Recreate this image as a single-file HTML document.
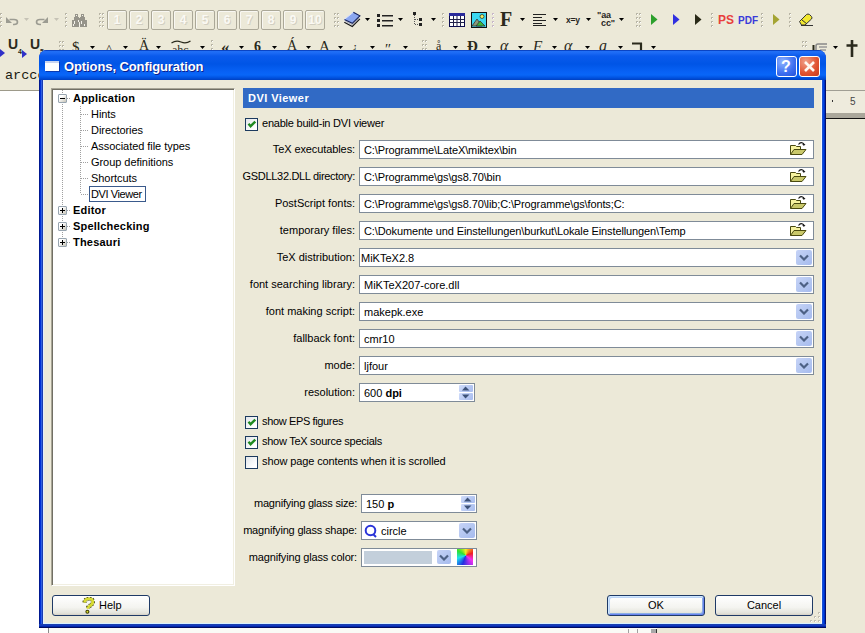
<!DOCTYPE html>
<html><head><meta charset="utf-8">
<style>
*{box-sizing:border-box;margin:0;padding:0}
html,body{width:865px;height:633px;overflow:hidden;background:#ECE9D8;font-family:"Liberation Sans",sans-serif;font-size:11px;color:#000;position:relative}
.a{position:absolute}
#dlg{left:39px;top:50px;width:787px;height:578px;background:#0831D9;border-radius:8px 8px 0 0}
#title{left:0;top:0;width:787px;height:30px;border-radius:8px 8px 0 0;background:linear-gradient(#0A44C4 0px,#0A44C4 1px,#2270F6 1px,#1C6AF4 3px,#0A5AEC 6px,#0055E6 14px,#0862F6 22px,#0866F8 25px,#0050DE 28px,#0040C0 30px)}
#client{left:4px;top:30px;width:779px;height:544px;background:#ECE9D8}
.lbl{position:absolute;text-align:right;white-space:nowrap;line-height:13px}
.tb{position:absolute;background:#fff;border:1px solid #7F9DB9;height:19px;white-space:nowrap;line-height:19px;padding-left:4px;overflow:hidden;border-color:#7F8B98}
.cb{position:absolute;width:13px;height:13px;border:1px solid #1C3A5E;background:linear-gradient(135deg,#E2E6EA,#FFFFFF 80%)}
.chk{position:absolute;white-space:nowrap;line-height:13px}
.dd{position:absolute;right:1px;top:1px;width:16px;height:15px;border-radius:2px;background:linear-gradient(135deg,#C6D3F7,#B2C5F0 60%,#A6BAEF)}
.dd svg{position:absolute;left:3px;top:4px}
.spin{position:absolute;right:1px;top:1px;width:14px;height:15px}
.su,.sd{position:absolute;left:0;width:14px;height:7px;border-radius:1px;background:linear-gradient(135deg,#D0DCFA,#B6C8F2 60%,#A8BCEE)}
.su{top:0}.sd{top:8px}
.su svg,.sd svg{position:absolute;left:3px;top:1px}
.btn{position:absolute;height:22px;border:1px solid #003C74;border-radius:3px;background:linear-gradient(#FFFFFF,#F4F4F0 60%,#E3E3DB 90%,#D6D0C5);text-align:center;line-height:18px;border-color:#1F3A66}
</style></head><body>
<div class="a" style="left:0;top:91px;width:60px;height:542px;background:#fff"></div>
<div class="a" style="left:0;top:90px;width:45px;height:1px;background:#9D9A8A"></div>
<div class="a" style="left:0;top:628px;width:657px;height:5px;background:#fff"></div>
<div class="a" style="left:48px;top:628px;width:1px;height:5px;background:#8A8A8A"></div>
<div class="a" style="left:49px;top:628px;width:608px;height:5px;background:#FAFAF6"></div>
<div class="a" style="left:628px;top:629px;width:1px;height:4px;background:#A0A0A0"></div>
<div class="a" style="left:637px;top:629px;width:1px;height:4px;background:#A0A0A0"></div>
<div class="a" style="left:651px;top:629px;width:5px;height:4px;background:#A8A8A8"></div>
<div class="a" style="left:656px;top:629px;width:1px;height:4px;background:#333"></div>
<div class="a" style="left:826px;top:90px;width:39px;height:1px;background:#A09E94"></div>
<div class="a" style="left:826px;top:91px;width:39px;height:22px;background:#EEEBDD"></div>
<div class="a" style="left:826px;top:113px;width:39px;height:5px;background:#AAA79B"></div>
<div class="a" style="left:826px;top:118px;width:39px;height:1px;background:#111"></div>
<div class="a" style="left:850px;top:95px;font-size:10px;line-height:13px;color:#444">5</div>
<div class="a" style="left:832px;top:100px;width:1px;height:2px;background:#333"></div>
<svg class="a" style="left:0px;top:13px" width="4" height="14"><rect x="0" y="0" width="2" height="2" fill="#B9B6A6"/><rect x="1" y="1" width="1" height="1" fill="#fff"/><rect x="0" y="4" width="2" height="2" fill="#B9B6A6"/><rect x="1" y="5" width="1" height="1" fill="#fff"/><rect x="0" y="8" width="2" height="2" fill="#B9B6A6"/><rect x="1" y="9" width="1" height="1" fill="#fff"/><rect x="0" y="12" width="2" height="2" fill="#B9B6A6"/><rect x="1" y="13" width="1" height="1" fill="#fff"/></svg>
<svg class="a" style="left:5px;top:16px" width="14" height="10"><path d="M4.5 3.5H9Q12.5 3.5 12.5 6Q12.5 8.5 9 8.5H8" fill="none" stroke="#9C9C92" stroke-width="1.6"/><path d="M1 1V7H7z" fill="#9C9C92"/></svg>
<svg class="a" style="left:24px;top:18px" width="5" height="3"><path d="M0 0H5L2.5 3z" fill="#C6C3B6"/></svg>
<svg class="a" style="left:35px;top:16px" width="14" height="10"><path d="M9.5 3.5H5Q1.5 3.5 1.5 6Q1.5 8.5 5 8.5H6" fill="none" stroke="#9C9C92" stroke-width="1.6"/><path d="M13 1V7H7z" fill="#9C9C92"/></svg>
<svg class="a" style="left:54px;top:18px" width="5" height="3"><path d="M0 0H5L2.5 3z" fill="#C6C3B6"/></svg>
<svg class="a" style="left:65px;top:13px" width="4" height="14"><rect x="0" y="0" width="2" height="2" fill="#B9B6A6"/><rect x="1" y="1" width="1" height="1" fill="#fff"/><rect x="0" y="4" width="2" height="2" fill="#B9B6A6"/><rect x="1" y="5" width="1" height="1" fill="#fff"/><rect x="0" y="8" width="2" height="2" fill="#B9B6A6"/><rect x="1" y="9" width="1" height="1" fill="#fff"/><rect x="0" y="12" width="2" height="2" fill="#B9B6A6"/><rect x="1" y="13" width="1" height="1" fill="#fff"/></svg>
<svg class="a" style="left:72px;top:14px" width="16" height="13"><g fill="#96948A"><rect x="3" y="0" width="3" height="3"/><rect x="9" y="0" width="3" height="3"/><rect x="2" y="3" width="5" height="3"/><rect x="8" y="3" width="5" height="3"/><rect x="6" y="4" width="3" height="4"/><rect x="0" y="6" width="7" height="7"/><rect x="8" y="6" width="7" height="7"/></g><g fill="#F4F2EA"><rect x="4" y="1" width="1" height="1"/><rect x="10" y="1" width="1" height="1"/><rect x="2" y="7" width="1" height="3"/><rect x="6" y="6" width="1" height="2"/><rect x="9" y="7" width="1" height="3"/><rect x="1" y="10" width="1" height="2"/><rect x="12" y="10" width="1" height="2"/><rect x="7" y="9" width="1" height="4"/></g></svg>
<svg class="a" style="left:99px;top:13px" width="7" height="14"><rect x="0" y="0" width="2" height="2" fill="#B9B6A6"/><rect x="1" y="1" width="1" height="1" fill="#fff"/><rect x="0" y="4" width="2" height="2" fill="#B9B6A6"/><rect x="1" y="5" width="1" height="1" fill="#fff"/><rect x="0" y="8" width="2" height="2" fill="#B9B6A6"/><rect x="1" y="9" width="1" height="1" fill="#fff"/><rect x="0" y="12" width="2" height="2" fill="#B9B6A6"/><rect x="1" y="13" width="1" height="1" fill="#fff"/><rect x="3" y="0" width="2" height="2" fill="#B9B6A6"/><rect x="4" y="1" width="1" height="1" fill="#fff"/><rect x="3" y="4" width="2" height="2" fill="#B9B6A6"/><rect x="4" y="5" width="1" height="1" fill="#fff"/><rect x="3" y="8" width="2" height="2" fill="#B9B6A6"/><rect x="4" y="9" width="1" height="1" fill="#fff"/><rect x="3" y="12" width="2" height="2" fill="#B9B6A6"/><rect x="4" y="13" width="1" height="1" fill="#fff"/></svg>
<div class="a" style="left:107px;top:10px;width:20px;height:20px;border:1px solid #ABA898;border-radius:2px;box-shadow:inset 1px 1px 0 #F8F7F2;color:#FAF9F4;font-weight:bold;font-size:12px;line-height:18px;text-align:center;text-shadow:1px 1px 0 #D2CFC2">1</div>
<div class="a" style="left:129px;top:10px;width:20px;height:20px;border:1px solid #ABA898;border-radius:2px;box-shadow:inset 1px 1px 0 #F8F7F2;color:#FAF9F4;font-weight:bold;font-size:12px;line-height:18px;text-align:center;text-shadow:1px 1px 0 #D2CFC2">2</div>
<div class="a" style="left:151px;top:10px;width:20px;height:20px;border:1px solid #ABA898;border-radius:2px;box-shadow:inset 1px 1px 0 #F8F7F2;color:#FAF9F4;font-weight:bold;font-size:12px;line-height:18px;text-align:center;text-shadow:1px 1px 0 #D2CFC2">3</div>
<div class="a" style="left:173px;top:10px;width:20px;height:20px;border:1px solid #ABA898;border-radius:2px;box-shadow:inset 1px 1px 0 #F8F7F2;color:#FAF9F4;font-weight:bold;font-size:12px;line-height:18px;text-align:center;text-shadow:1px 1px 0 #D2CFC2">4</div>
<div class="a" style="left:195px;top:10px;width:20px;height:20px;border:1px solid #ABA898;border-radius:2px;box-shadow:inset 1px 1px 0 #F8F7F2;color:#FAF9F4;font-weight:bold;font-size:12px;line-height:18px;text-align:center;text-shadow:1px 1px 0 #D2CFC2">5</div>
<div class="a" style="left:217px;top:10px;width:20px;height:20px;border:1px solid #ABA898;border-radius:2px;box-shadow:inset 1px 1px 0 #F8F7F2;color:#FAF9F4;font-weight:bold;font-size:12px;line-height:18px;text-align:center;text-shadow:1px 1px 0 #D2CFC2">6</div>
<div class="a" style="left:239px;top:10px;width:20px;height:20px;border:1px solid #ABA898;border-radius:2px;box-shadow:inset 1px 1px 0 #F8F7F2;color:#FAF9F4;font-weight:bold;font-size:12px;line-height:18px;text-align:center;text-shadow:1px 1px 0 #D2CFC2">7</div>
<div class="a" style="left:261px;top:10px;width:20px;height:20px;border:1px solid #ABA898;border-radius:2px;box-shadow:inset 1px 1px 0 #F8F7F2;color:#FAF9F4;font-weight:bold;font-size:12px;line-height:18px;text-align:center;text-shadow:1px 1px 0 #D2CFC2">8</div>
<div class="a" style="left:283px;top:10px;width:20px;height:20px;border:1px solid #ABA898;border-radius:2px;box-shadow:inset 1px 1px 0 #F8F7F2;color:#FAF9F4;font-weight:bold;font-size:12px;line-height:18px;text-align:center;text-shadow:1px 1px 0 #D2CFC2">9</div>
<div class="a" style="left:305px;top:10px;width:20px;height:20px;border:1px solid #ABA898;border-radius:2px;box-shadow:inset 1px 1px 0 #F8F7F2;color:#FAF9F4;font-weight:bold;font-size:12px;line-height:18px;text-align:center;text-shadow:1px 1px 0 #D2CFC2">10</div>
<svg class="a" style="left:334px;top:13px" width="7" height="15"><rect x="0" y="0" width="2" height="2" fill="#B9B6A6"/><rect x="1" y="1" width="1" height="1" fill="#fff"/><rect x="0" y="4" width="2" height="2" fill="#B9B6A6"/><rect x="1" y="5" width="1" height="1" fill="#fff"/><rect x="0" y="8" width="2" height="2" fill="#B9B6A6"/><rect x="1" y="9" width="1" height="1" fill="#fff"/><rect x="0" y="12" width="2" height="2" fill="#B9B6A6"/><rect x="1" y="13" width="1" height="1" fill="#fff"/><rect x="3" y="0" width="2" height="2" fill="#B9B6A6"/><rect x="4" y="1" width="1" height="1" fill="#fff"/><rect x="3" y="4" width="2" height="2" fill="#B9B6A6"/><rect x="4" y="5" width="1" height="1" fill="#fff"/><rect x="3" y="8" width="2" height="2" fill="#B9B6A6"/><rect x="4" y="9" width="1" height="1" fill="#fff"/><rect x="3" y="12" width="2" height="2" fill="#B9B6A6"/><rect x="4" y="13" width="1" height="1" fill="#fff"/></svg>
<svg class="a" style="left:343px;top:11px" width="18" height="17" viewBox="0 0 18 17"><path d="M1.3 8.5V11.2L9.3 15.5L16.9 7.8V4.8Z" fill="#F4F4F4"/><path d="M1.3 11.2L9.3 15.5L16.9 7.8" fill="none" stroke="#151515" stroke-width="1.1"/><path d="M2.3 10.2L9.3 13.8L16 7" fill="none" stroke="#A8A8B0" stroke-width=".9"/><path d="M10.3 1.2L16.9 4.8L9.3 12.3L1.3 8.5Z" fill="#8AA6F0"/><path d="M10.3 1.2L16.9 4.8L9.3 12.3L1.3 8.5" fill="none" stroke="#14205A" stroke-width="1.1"/><path d="M1.6 8.2L10.2 1.4" stroke="#D8E2FF" stroke-width="1"/></svg>
<svg class="a" style="left:365px;top:18px" width="5" height="3"><path d="M0 0H5L2.5 3z" fill="#000"/></svg>
<svg class="a" style="left:377px;top:14px" width="16" height="13"><g fill="#222"><rect x="0" y="0" width="3" height="3"/><rect x="0" y="5" width="3" height="3"/><rect x="0" y="10" width="3" height="3"/><rect x="5" y="1" width="11" height="1.5"/><rect x="5" y="6" width="11" height="1.5"/><rect x="5" y="11" width="11" height="1.5"/></g></svg>
<svg class="a" style="left:398px;top:18px" width="5" height="3"><path d="M0 0H5L2.5 3z" fill="#000"/></svg>
<svg class="a" style="left:413px;top:12px" width="10" height="15"><rect x="0" y="0" width="3" height="3" fill="#222"/><rect x="6" y="6" width="3" height="3" fill="#222"/><rect x="6" y="11" width="3" height="3" fill="#222"/><path d="M1.5 3V13M2 7.5H6M2 12.5H6" stroke="#555" stroke-dasharray="1 1"/></svg>
<svg class="a" style="left:431px;top:18px" width="5" height="3"><path d="M0 0H5L2.5 3z" fill="#000"/></svg>
<svg class="a" style="left:442px;top:13px" width="4" height="14"><rect x="0" y="0" width="2" height="2" fill="#B9B6A6"/><rect x="1" y="1" width="1" height="1" fill="#fff"/><rect x="0" y="4" width="2" height="2" fill="#B9B6A6"/><rect x="1" y="5" width="1" height="1" fill="#fff"/><rect x="0" y="8" width="2" height="2" fill="#B9B6A6"/><rect x="1" y="9" width="1" height="1" fill="#fff"/><rect x="0" y="12" width="2" height="2" fill="#B9B6A6"/><rect x="1" y="13" width="1" height="1" fill="#fff"/></svg>
<svg class="a" style="left:449px;top:13px" width="16" height="14"><rect x="0.5" y="0.5" width="15" height="13" fill="#fff" stroke="#0C0C50"/><rect x="0" y="0" width="16" height="3" fill="#2A2A9A"/><path d="M1 6.5H15M1 9.5H15M4.5 3V13M8 3V13M11.5 3V13" stroke="#22224A"/></svg>
<svg class="a" style="left:471px;top:12px" width="16" height="16"><rect x="0.5" y="0.5" width="15" height="15" fill="#3CD8F0" stroke="#111"/><circle cx="11" cy="4.5" r="2" fill="#F0F060" stroke="#222" stroke-width=".7"/><path d="M1 14L6 7L11 14Z" fill="#8A9A7A" stroke="#333" stroke-width=".8"/><path d="M5 14L9 9L14 14Z" fill="#3AB83A" stroke="#333" stroke-width=".8"/></svg>
<svg class="a" style="left:492px;top:13px" width="4" height="14"><rect x="0" y="0" width="2" height="2" fill="#C8B8C8"/><rect x="1" y="1" width="1" height="1" fill="#fff"/><rect x="0" y="4" width="2" height="2" fill="#C8B8C8"/><rect x="1" y="5" width="1" height="1" fill="#fff"/><rect x="0" y="8" width="2" height="2" fill="#C8B8C8"/><rect x="1" y="9" width="1" height="1" fill="#fff"/><rect x="0" y="12" width="2" height="2" fill="#C8B8C8"/><rect x="1" y="13" width="1" height="1" fill="#fff"/></svg>
<div class="a" style="left:500px;top:8px;font-family:'Liberation Serif',serif;font-weight:bold;font-size:20px;line-height:22px;color:#2A2A1C">F</div>
<svg class="a" style="left:520px;top:18px" width="5" height="3"><path d="M0 0H5L2.5 3z" fill="#000"/></svg>
<svg class="a" style="left:533px;top:14px" width="13" height="12"><path d="M0 0.5H13M0 3.5H9M0 6.5H13M0 9.5H9M0 11.5H13" stroke="#222" stroke-width="1"/></svg>
<svg class="a" style="left:553px;top:18px" width="5" height="3"><path d="M0 0H5L2.5 3z" fill="#000"/></svg>
<div class="a" style="left:566px;top:15px;font-weight:bold;font-size:8.5px;line-height:10px;color:#26261E;letter-spacing:-0.2px">x=y</div>
<svg class="a" style="left:586px;top:18px" width="5" height="3"><path d="M0 0H5L2.5 3z" fill="#000"/></svg>
<div class="a" style="left:597px;top:11px;font-weight:bold;font-size:9px;line-height:8px;color:#26261E;letter-spacing:-0.1px">"aa<br><span style="margin-left:4px">cc"</span></div>
<svg class="a" style="left:619px;top:18px" width="5" height="3"><path d="M0 0H5L2.5 3z" fill="#000"/></svg>
<svg class="a" style="left:636px;top:13px" width="7" height="15"><rect x="0" y="0" width="2" height="2" fill="#B9B6A6"/><rect x="1" y="1" width="1" height="1" fill="#fff"/><rect x="0" y="4" width="2" height="2" fill="#B9B6A6"/><rect x="1" y="5" width="1" height="1" fill="#fff"/><rect x="0" y="8" width="2" height="2" fill="#B9B6A6"/><rect x="1" y="9" width="1" height="1" fill="#fff"/><rect x="0" y="12" width="2" height="2" fill="#B9B6A6"/><rect x="1" y="13" width="1" height="1" fill="#fff"/><rect x="3" y="0" width="2" height="2" fill="#B9B6A6"/><rect x="4" y="1" width="1" height="1" fill="#fff"/><rect x="3" y="4" width="2" height="2" fill="#B9B6A6"/><rect x="4" y="5" width="1" height="1" fill="#fff"/><rect x="3" y="8" width="2" height="2" fill="#B9B6A6"/><rect x="4" y="9" width="1" height="1" fill="#fff"/><rect x="3" y="12" width="2" height="2" fill="#B9B6A6"/><rect x="4" y="13" width="1" height="1" fill="#fff"/></svg>
<svg class="a" style="left:651px;top:14px" width="7" height="11"><path d="M0 0L6.5 5.5L0 11Z" fill="#2CA02C"/></svg>
<svg class="a" style="left:673px;top:14px" width="7" height="11"><path d="M0 0L6.5 5.5L0 11Z" fill="#3030E0"/></svg>
<svg class="a" style="left:695px;top:14px" width="7" height="11"><path d="M0 0L6.5 5.5L0 11Z" fill="#2A2A18"/></svg>
<svg class="a" style="left:711px;top:13px" width="4" height="14"><rect x="0" y="0" width="2" height="2" fill="#B9B6A6"/><rect x="1" y="1" width="1" height="1" fill="#fff"/><rect x="0" y="4" width="2" height="2" fill="#B9B6A6"/><rect x="1" y="5" width="1" height="1" fill="#fff"/><rect x="0" y="8" width="2" height="2" fill="#B9B6A6"/><rect x="1" y="9" width="1" height="1" fill="#fff"/><rect x="0" y="12" width="2" height="2" fill="#B9B6A6"/><rect x="1" y="13" width="1" height="1" fill="#fff"/></svg>
<div class="a" style="left:718px;top:14px;font-weight:bold;font-size:12px;line-height:12px;color:#E8403C">PS</div>
<div class="a" style="left:738px;top:15px;font-weight:bold;font-size:10px;line-height:11px;color:#3A3ADA">PDF</div>
<svg class="a" style="left:761px;top:13px" width="4" height="14"><rect x="0" y="0" width="2" height="2" fill="#B9B6A6"/><rect x="1" y="1" width="1" height="1" fill="#fff"/><rect x="0" y="4" width="2" height="2" fill="#B9B6A6"/><rect x="1" y="5" width="1" height="1" fill="#fff"/><rect x="0" y="8" width="2" height="2" fill="#B9B6A6"/><rect x="1" y="9" width="1" height="1" fill="#fff"/><rect x="0" y="12" width="2" height="2" fill="#B9B6A6"/><rect x="1" y="13" width="1" height="1" fill="#fff"/></svg>
<svg class="a" style="left:773px;top:14px" width="7" height="11"><path d="M0 0L6.5 5.5L0 11Z" fill="#A4A432"/></svg>
<svg class="a" style="left:789px;top:13px" width="4" height="14"><rect x="0" y="0" width="2" height="2" fill="#B9B6A6"/><rect x="1" y="1" width="1" height="1" fill="#fff"/><rect x="0" y="4" width="2" height="2" fill="#B9B6A6"/><rect x="1" y="5" width="1" height="1" fill="#fff"/><rect x="0" y="8" width="2" height="2" fill="#B9B6A6"/><rect x="1" y="9" width="1" height="1" fill="#fff"/><rect x="0" y="12" width="2" height="2" fill="#B9B6A6"/><rect x="1" y="13" width="1" height="1" fill="#fff"/></svg>
<svg class="a" style="left:798px;top:13px" width="16" height="13"><path d="M1.5 8.5L8.5 1.5Q10 0.5 11.5 1.5L13.5 3.5Q14.5 5 13.5 6L7 12H3.5Z" fill="#F2E830" stroke="#333" stroke-width="1"/><path d="M3 12.5H15" stroke="#333"/><path d="M4 7L9 11" stroke="#333"/></svg>
<svg class="a" style="left:0;top:49px" width="6" height="8"><path d="M0 0L5 4L0 8Z" fill="#3030C8"/></svg>
<div class="a" style="left:8px;top:37px;font-weight:bold;font-size:14px;line-height:14px;color:#2A2A1C">U</div><div class="a" style="left:18px;top:48px;font-weight:bold;font-size:7px;line-height:7px;color:#2A2A1C">4</div>
<svg class="a" style="left:22px;top:50px" width="6" height="8"><path d="M0 0L5 4L0 8Z" fill="#3030C8"/></svg>
<div class="a" style="left:30px;top:37px;font-weight:bold;font-size:14px;line-height:14px;color:#2A2A1C">U</div><div class="a" style="left:40px;top:48px;font-weight:bold;font-size:7px;line-height:7px;color:#2A2A1C">5</div>
<svg class="a" style="left:59px;top:41px" width="7" height="11"><rect x="0" y="0" width="2" height="2" fill="#B9B6A6"/><rect x="1" y="1" width="1" height="1" fill="#fff"/><rect x="0" y="4" width="2" height="2" fill="#B9B6A6"/><rect x="1" y="5" width="1" height="1" fill="#fff"/><rect x="0" y="8" width="2" height="2" fill="#B9B6A6"/><rect x="1" y="9" width="1" height="1" fill="#fff"/><rect x="3" y="0" width="2" height="2" fill="#B9B6A6"/><rect x="4" y="1" width="1" height="1" fill="#fff"/><rect x="3" y="4" width="2" height="2" fill="#B9B6A6"/><rect x="4" y="5" width="1" height="1" fill="#fff"/><rect x="3" y="8" width="2" height="2" fill="#B9B6A6"/><rect x="4" y="9" width="1" height="1" fill="#fff"/></svg>
<div class="a" style="left:72px;top:39px;font-family:'Liberation Serif',serif;font-size:15px;line-height:17px;color:#2A2A1C;">$</div>
<svg class="a" style="left:90px;top:46px" width="5" height="3"><path d="M0 0H5L2.5 3z" fill="#000"/></svg>
<div class="a" style="left:106px;top:41px;font-family:'Liberation Serif',serif;font-size:13px;line-height:15px;color:#2A2A1C;">^</div>
<svg class="a" style="left:123px;top:46px" width="5" height="3"><path d="M0 0H5L2.5 3z" fill="#000"/></svg>
<div class="a" style="left:139px;top:38px;font-family:'Liberation Serif',serif;font-size:14px;line-height:16px;color:#2A2A1C;">Ä</div>
<svg class="a" style="left:156px;top:46px" width="5" height="3"><path d="M0 0H5L2.5 3z" fill="#000"/></svg>
<svg class="a" style="left:171px;top:40px" width="20" height="4"><path d="M0.5 3Q5 0 10 2Q15 4 19.5 1" fill="none" stroke="#2A2A1C" stroke-width="1.2"/></svg>
<div class="a" style="left:172px;top:43px;font-family:'Liberation Serif',serif;font-size:12px;line-height:14px;color:#2A2A1C;letter-spacing:0px">ahc</div>
<svg class="a" style="left:200px;top:46px" width="5" height="3"><path d="M0 0H5L2.5 3z" fill="#000"/></svg>
<svg class="a" style="left:211px;top:40px" width="4" height="10"><rect x="0" y="0" width="2" height="2" fill="#B9B6A6"/><rect x="1" y="1" width="1" height="1" fill="#fff"/><rect x="0" y="4" width="2" height="2" fill="#B9B6A6"/><rect x="1" y="5" width="1" height="1" fill="#fff"/><rect x="0" y="8" width="2" height="2" fill="#B9B6A6"/><rect x="1" y="9" width="1" height="1" fill="#fff"/></svg>
<div class="a" style="left:221px;top:38px;font-family:'Liberation Serif',serif;font-size:17px;line-height:19px;color:#2A2A1C;font-weight:bold">«</div>
<svg class="a" style="left:239px;top:46px" width="5" height="3"><path d="M0 0H5L2.5 3z" fill="#000"/></svg>
<div class="a" style="left:254px;top:39px;font-family:'Liberation Serif',serif;font-size:14px;line-height:16px;color:#2A2A1C;font-weight:bold">6</div>
<svg class="a" style="left:272px;top:46px" width="5" height="3"><path d="M0 0H5L2.5 3z" fill="#000"/></svg>
<div class="a" style="left:287px;top:38px;font-family:'Liberation Serif',serif;font-size:14px;line-height:16px;color:#2A2A1C;">Á</div>
<svg class="a" style="left:306px;top:46px" width="5" height="3"><path d="M0 0H5L2.5 3z" fill="#000"/></svg>
<div class="a" style="left:319px;top:38px;font-family:'Liberation Serif',serif;font-size:15px;line-height:17px;color:#2A2A1C;">A</div>
<svg class="a" style="left:338px;top:46px" width="5" height="3"><path d="M0 0H5L2.5 3z" fill="#000"/></svg>
<div class="a" style="left:352px;top:39px;font-family:'Liberation Serif',serif;font-size:13px;line-height:15px;color:#2A2A1C;">¿</div>
<svg class="a" style="left:370px;top:46px" width="5" height="3"><path d="M0 0H5L2.5 3z" fill="#000"/></svg>
<div class="a" style="left:384px;top:41px;font-family:'Liberation Serif',serif;font-size:15px;line-height:17px;color:#2A2A1C;font-style:italic">″</div>
<svg class="a" style="left:403px;top:46px" width="5" height="3"><path d="M0 0H5L2.5 3z" fill="#000"/></svg>
<svg class="a" style="left:422px;top:40px" width="7" height="10"><rect x="0" y="0" width="2" height="2" fill="#B9B6A6"/><rect x="1" y="1" width="1" height="1" fill="#fff"/><rect x="0" y="4" width="2" height="2" fill="#B9B6A6"/><rect x="1" y="5" width="1" height="1" fill="#fff"/><rect x="0" y="8" width="2" height="2" fill="#B9B6A6"/><rect x="1" y="9" width="1" height="1" fill="#fff"/><rect x="3" y="0" width="2" height="2" fill="#B9B6A6"/><rect x="4" y="1" width="1" height="1" fill="#fff"/><rect x="3" y="4" width="2" height="2" fill="#B9B6A6"/><rect x="4" y="5" width="1" height="1" fill="#fff"/><rect x="3" y="8" width="2" height="2" fill="#B9B6A6"/><rect x="4" y="9" width="1" height="1" fill="#fff"/></svg>
<div class="a" style="left:436px;top:39px;font-family:'Liberation Serif',serif;font-size:12px;line-height:14px;color:#2A2A1C;">å</div>
<svg class="a" style="left:453px;top:46px" width="5" height="3"><path d="M0 0H5L2.5 3z" fill="#000"/></svg>
<div class="a" style="left:467px;top:38px;font-family:'Liberation Serif',serif;font-size:15px;line-height:17px;color:#2A2A1C;font-weight:bold">Đ</div>
<svg class="a" style="left:486px;top:46px" width="5" height="3"><path d="M0 0H5L2.5 3z" fill="#000"/></svg>
<div class="a" style="left:500px;top:37px;font-family:'Liberation Serif',serif;font-size:16px;line-height:18px;color:#2A2A1C;font-style:italic">α</div>
<svg class="a" style="left:518px;top:46px" width="5" height="3"><path d="M0 0H5L2.5 3z" fill="#000"/></svg>
<div class="a" style="left:533px;top:38px;font-family:'Liberation Serif',serif;font-size:15px;line-height:17px;color:#2A2A1C;font-style:italic">F</div>
<svg class="a" style="left:552px;top:46px" width="5" height="3"><path d="M0 0H5L2.5 3z" fill="#000"/></svg>
<div class="a" style="left:564px;top:37px;font-family:'Liberation Serif',serif;font-size:16px;line-height:18px;color:#2A2A1C;font-style:italic">α</div>
<svg class="a" style="left:585px;top:46px" width="5" height="3"><path d="M0 0H5L2.5 3z" fill="#000"/></svg>
<div class="a" style="left:599px;top:37px;font-family:'Liberation Serif',serif;font-size:16px;line-height:18px;color:#2A2A1C;font-style:italic">a</div>
<svg class="a" style="left:618px;top:46px" width="5" height="3"><path d="M0 0H5L2.5 3z" fill="#000"/></svg>
<svg class="a" style="left:632px;top:42px" width="11" height="9"><path d="M0 1.5H10M9 1V9" stroke="#2A2A1C" stroke-width="2.2"/></svg>
<svg class="a" style="left:651px;top:46px" width="5" height="3"><path d="M0 0H5L2.5 3z" fill="#000"/></svg>
<svg class="a" style="left:802px;top:41px" width="7" height="9"><rect x="0" y="0" width="2" height="2" fill="#B9B6A6"/><rect x="1" y="1" width="1" height="1" fill="#fff"/><rect x="0" y="4" width="2" height="2" fill="#B9B6A6"/><rect x="1" y="5" width="1" height="1" fill="#fff"/><rect x="3" y="0" width="2" height="2" fill="#B9B6A6"/><rect x="4" y="1" width="1" height="1" fill="#fff"/><rect x="3" y="4" width="2" height="2" fill="#B9B6A6"/><rect x="4" y="5" width="1" height="1" fill="#fff"/></svg>
<svg class="a" style="left:810px;top:42px" width="20" height="10"><path d="M3.5 10V3" stroke="#2A2A1C" stroke-width="2"/><path d="M6 10V4Q6 2 8 2H17" fill="none" stroke="#888" stroke-width="1.5"/><path d="M9 5H17M10 8H16" stroke="#999" stroke-width="1.3"/></svg>
<svg class="a" style="left:833px;top:46px" width="5" height="3"><path d="M0 0H5L2.5 3z" fill="#000"/></svg>
<svg class="a" style="left:846px;top:40px" width="12" height="17"><path d="M6 0V17M0.5 5.5H11.5" stroke="#2A2A1C" stroke-width="2.6"/></svg>
<div class="a" style="left:5px;top:68px;font-family:'Liberation Mono',monospace;font-size:13.5px;line-height:16px;color:#1A1A10">arccos</div>

<!-- DIALOG -->
<div id="dlg" class="a">
  <div id="title" class="a"></div>
  <div class="a" style="left:6px;top:11px;width:14px;height:10px;background:#fff;border-top:2px solid #C8D4F0;box-shadow:1px 1px 0 #0A3AB0"></div>
  <div class="a" style="left:25px;top:9px;color:#fff;font-weight:bold;font-size:13px;line-height:16px;white-space:nowrap;text-shadow:1px 1px 0 #0A1E8C;letter-spacing:-0.1px">Options, Configuration</div>
  <!-- help / close -->
  <div class="a" style="left:737px;top:6px;width:21px;height:21px;border:1px solid #fff;border-radius:3px;background:radial-gradient(circle at 30% 25%,#8DB2FF,#3D6EF0 60%,#2250D8)"><span class="a" style="left:4px;top:1px;color:#fff;font-weight:bold;font-size:16px;line-height:18px">?</span></div>
  <div class="a" style="left:760px;top:6px;width:21px;height:21px;border:1px solid #fff;border-radius:3px;background:radial-gradient(circle at 30% 25%,#F0A088,#E0522F 60%,#C83C1C)">
    <svg class="a" style="left:4px;top:4px" width="11" height="11"><path d="M1 1L10 10M10 1L1 10" stroke="#FFF8F0" stroke-width="2.6"/></svg></div>
  <div id="client" class="a"></div>
  <div class="a" style="left:0;top:30px;width:4px;height:548px;background:linear-gradient(90deg,#001890 25%,#0030D8 25%,#0030D8 50%,#3060E0 50%,#3060E0 75%,#1A3CB0 75%)"></div>
  <div class="a" style="left:783px;top:30px;width:4px;height:548px;background:linear-gradient(90deg,#1A50D0 25%,#0044E8 25%,#0044E8 50%,#0030C0 50%,#0030C0 75%,#000C70 75%)"></div>
  <div class="a" style="left:0;top:574px;width:787px;height:4px;background:linear-gradient(#1A40B0 25%,#1438C0 25%,#1438C0 50%,#0028A8 50%,#0028A8 75%,#000A60 75%)"></div>
  <div class="a" style="left:4px;top:30px;width:1px;height:544px;background:#E4EEFA"></div>
  <div class="a" style="left:782px;top:30px;width:1px;height:544px;background:#F4F8FF"></div>
  <div class="a" style="left:4px;top:573px;width:779px;height:1px;background:#D8F0FF"></div>
</div>

<!-- TREE -->
<div class="a" style="left:51px;top:88px;width:184px;height:498px;background:#fff;border-top:1px solid #A8A596;border-left:1px solid #A8A596;border-right:1px solid #FFFFFF;border-bottom:1px solid #FFFFFF;box-shadow:inset 1px 1px 0 #716F64,inset -1px -1px 0 #F1EFE2"></div>

<!-- Header -->
<div class="a" style="left:243px;top:88px;width:571px;height:20px;background:#316AC5;color:#fff;font-weight:bold;line-height:20px;padding-left:5px;letter-spacing:0.45px">DVI Viewer</div>

<div class="cb" style="left:245px;top:118px"><svg class="a" style="left:1px;top:1px" width="10" height="10"><path d="M1.5 3.8L3.6 6.2L8.3 1.6" fill="none" stroke="#1F8A1F" stroke-width="2.4"/></svg></div><div class="chk" style="left:262px;top:117px;letter-spacing:-0.22px">enable build-in DVI viewer</div>
<div class="lbl" style="right:510px;top:143px;letter-spacing:-0.1px">TeX executables:</div>
<div class="tb" style="left:359px;top:140px;width:455px"><span style="letter-spacing:-0.12px">C:\Programme\LateX\miktex\bin</span><svg class="a" style="left:429px;top:0px" width="18" height="15" viewBox="0 0 18 15"><path d="M9.5 3.5 Q12 0 15 3" fill="none" stroke="#1a1a1a" stroke-width="1.2"/><path d="M13.2 3h3.3l-1.6 2z" fill="#1a1a1a"/><path d="M1.5 4.5h5l1 1h4v3H5L1.5 13.5z" fill="#F7F3A0"/><path d="M1.5 13.5V4.5h5l1 1h4v3" fill="none" stroke="#4A4A10" stroke-width="1"/><path d="M1.5 13.5L5 8.5H17L13 13.5Z" fill="#C9C86A" stroke="#4A4A10" stroke-width="1" stroke-linejoin="round"/></svg></div>
<div class="lbl" style="right:510px;top:170px;letter-spacing:-0.32px">GSDLL32.DLL directory:</div>
<div class="tb" style="left:359px;top:167px;width:455px"><span style="letter-spacing:-0.12px">C:\Programme\gs\gs8.70\bin</span><svg class="a" style="left:429px;top:0px" width="18" height="15" viewBox="0 0 18 15"><path d="M9.5 3.5 Q12 0 15 3" fill="none" stroke="#1a1a1a" stroke-width="1.2"/><path d="M13.2 3h3.3l-1.6 2z" fill="#1a1a1a"/><path d="M1.5 4.5h5l1 1h4v3H5L1.5 13.5z" fill="#F7F3A0"/><path d="M1.5 13.5V4.5h5l1 1h4v3" fill="none" stroke="#4A4A10" stroke-width="1"/><path d="M1.5 13.5L5 8.5H17L13 13.5Z" fill="#C9C86A" stroke="#4A4A10" stroke-width="1" stroke-linejoin="round"/></svg></div>
<div class="lbl" style="right:510px;top:197px;letter-spacing:0px">PostScript fonts:</div>
<div class="tb" style="left:359px;top:194px;width:455px"><span style="letter-spacing:-0.12px">C:\Programme\gs\gs8.70\lib;C:\Programme\gs\fonts;C:</span><svg class="a" style="left:429px;top:0px" width="18" height="15" viewBox="0 0 18 15"><path d="M9.5 3.5 Q12 0 15 3" fill="none" stroke="#1a1a1a" stroke-width="1.2"/><path d="M13.2 3h3.3l-1.6 2z" fill="#1a1a1a"/><path d="M1.5 4.5h5l1 1h4v3H5L1.5 13.5z" fill="#F7F3A0"/><path d="M1.5 13.5V4.5h5l1 1h4v3" fill="none" stroke="#4A4A10" stroke-width="1"/><path d="M1.5 13.5L5 8.5H17L13 13.5Z" fill="#C9C86A" stroke="#4A4A10" stroke-width="1" stroke-linejoin="round"/></svg></div>
<div class="lbl" style="right:510px;top:224px;letter-spacing:0px">temporary files:</div>
<div class="tb" style="left:359px;top:221px;width:455px"><span style="letter-spacing:-0.12px">C:\Dokumente und Einstellungen\burkut\Lokale Einstellungen\Temp</span><svg class="a" style="left:429px;top:0px" width="18" height="15" viewBox="0 0 18 15"><path d="M9.5 3.5 Q12 0 15 3" fill="none" stroke="#1a1a1a" stroke-width="1.2"/><path d="M13.2 3h3.3l-1.6 2z" fill="#1a1a1a"/><path d="M1.5 4.5h5l1 1h4v3H5L1.5 13.5z" fill="#F7F3A0"/><path d="M1.5 13.5V4.5h5l1 1h4v3" fill="none" stroke="#4A4A10" stroke-width="1"/><path d="M1.5 13.5L5 8.5H17L13 13.5Z" fill="#C9C86A" stroke="#4A4A10" stroke-width="1" stroke-linejoin="round"/></svg></div>
<div class="lbl" style="right:510px;top:251px;letter-spacing:0px">TeX distribution:</div>
<div class="tb" style="left:359px;top:248px;width:455px"><span style="margin-left:-3px">MiKTeX2.8</span><div class="dd"><svg width="10" height="7"><path d="M1 1.5L5 5.5L9 1.5" fill="none" stroke="#4D6185" stroke-width="2.2"/></svg></div></div>
<div class="lbl" style="right:510px;top:278px;letter-spacing:0px">font searching library:</div>
<div class="tb" style="left:359px;top:275px;width:455px">MiKTeX207-core.dll<div class="dd"><svg width="10" height="7"><path d="M1 1.5L5 5.5L9 1.5" fill="none" stroke="#4D6185" stroke-width="2.2"/></svg></div></div>
<div class="lbl" style="right:510px;top:305px;letter-spacing:0px">font making script:</div>
<div class="tb" style="left:359px;top:302px;width:455px">makepk.exe<div class="dd"><svg width="10" height="7"><path d="M1 1.5L5 5.5L9 1.5" fill="none" stroke="#4D6185" stroke-width="2.2"/></svg></div></div>
<div class="lbl" style="right:510px;top:332px;letter-spacing:0px">fallback font:</div>
<div class="tb" style="left:359px;top:329px;width:455px">cmr10<div class="dd"><svg width="10" height="7"><path d="M1 1.5L5 5.5L9 1.5" fill="none" stroke="#4D6185" stroke-width="2.2"/></svg></div></div>
<div class="lbl" style="right:510px;top:359px;letter-spacing:0px">mode:</div>
<div class="tb" style="left:359px;top:356px;width:455px">ljfour<div class="dd"><svg width="10" height="7"><path d="M1 1.5L5 5.5L9 1.5" fill="none" stroke="#4D6185" stroke-width="2.2"/></svg></div></div>
<div class="lbl" style="right:510px;top:386px;letter-spacing:0px">resolution:</div>
<div class="tb" style="left:359px;top:383px;width:116px">600 <b>dpi</b><div class="spin"><div class="su"><svg width="8" height="5"><path d="M0 4.5L3.5 0.5L7.5 4.5Z" fill="#3D5279"/></svg></div><div class="sd"><svg width="8" height="5"><path d="M0 0.5L3.5 4.5L7.5 0.5Z" fill="#3D5279"/></svg></div></div></div>
<div class="cb" style="left:245px;top:416px"><svg class="a" style="left:1px;top:1px" width="10" height="10"><path d="M1.5 3.8L3.6 6.2L8.3 1.6" fill="none" stroke="#1F8A1F" stroke-width="2.4"/></svg></div><div class="chk" style="left:262px;top:415px;letter-spacing:-0.36px">show EPS figures</div>
<div class="cb" style="left:245px;top:436px"><svg class="a" style="left:1px;top:1px" width="10" height="10"><path d="M1.5 3.8L3.6 6.2L8.3 1.6" fill="none" stroke="#1F8A1F" stroke-width="2.4"/></svg></div><div class="chk" style="left:262px;top:435px;letter-spacing:-0.27px">show TeX source specials</div>
<div class="cb" style="left:245px;top:456px"></div><div class="chk" style="left:262px;top:455px;letter-spacing:-0.11px">show page contents when it is scrolled</div>
<div class="lbl" style="right:508px;top:497px;letter-spacing:-0.21px">magnifying glass size:</div>
<div class="tb" style="left:361px;top:494px;width:116px">150 <b>p</b><div class="spin"><div class="su"><svg width="8" height="5"><path d="M0 4.5L3.5 0.5L7.5 4.5Z" fill="#3D5279"/></svg></div><div class="sd"><svg width="8" height="5"><path d="M0 0.5L3.5 4.5L7.5 0.5Z" fill="#3D5279"/></svg></div></div></div>
<div class="lbl" style="right:508px;top:524px;letter-spacing:-0.18px">magnifying glass shape:</div>
<div class="tb" style="left:361px;top:521px;width:116px;padding-left:19px"><svg class="a" style="left:2px;top:2px" width="15" height="14"><circle cx="6.5" cy="6.5" r="4.8" fill="none" stroke="#2A34D8" stroke-width="2"/><path d="M9.5 10.5l2.5 2.5" stroke="#2A34D8" stroke-width="2"/></svg>circle<div class="dd"><svg width="10" height="7"><path d="M1 1.5L5 5.5L9 1.5" fill="none" stroke="#4D6185" stroke-width="2.2"/></svg></div></div>
<div class="lbl" style="right:508px;top:551px;letter-spacing:-0.16px">magnifying glass color:</div>
<div class="tb" style="left:361px;top:548px;width:116px"><div class="a" style="left:2px;top:2px;width:68px;height:13px;background:#C3CFDB"></div><div class="dd" style="right:25px;width:14px;height:14px"><svg style="left:2px" width="10" height="7"><path d="M1 1.5L5 5.5L9 1.5" fill="none" stroke="#4D6185" stroke-width="2.2"/></svg></div><div class="a" style="right:3px;top:0px;width:16px;height:16px;background:conic-gradient(from 0deg at 55% 40%,#f8f020,#f02020 70deg,#f030f0 130deg,#2030e0 200deg,#20e0f0 250deg,#30e030 300deg,#f8f020)"></div></div>
<svg class="a" style="left:0;top:0" width="865" height="633"><path d="M62.5 90V243" stroke="#A0A0A0" stroke-width="1" stroke-dasharray="1 1"/><path d="M80.5 106V194" stroke="#A0A0A0" stroke-width="1" stroke-dasharray="1 1"/><path d="M67 98.5H71" stroke="#A0A0A0" stroke-width="1" stroke-dasharray="1 1"/><path d="M81 114.5H89" stroke="#A0A0A0" stroke-width="1" stroke-dasharray="1 1"/><path d="M81 130.5H89" stroke="#A0A0A0" stroke-width="1" stroke-dasharray="1 1"/><path d="M81 146.5H89" stroke="#A0A0A0" stroke-width="1" stroke-dasharray="1 1"/><path d="M81 162.5H89" stroke="#A0A0A0" stroke-width="1" stroke-dasharray="1 1"/><path d="M81 178.5H89" stroke="#A0A0A0" stroke-width="1" stroke-dasharray="1 1"/><path d="M81 194.5H89" stroke="#A0A0A0" stroke-width="1" stroke-dasharray="1 1"/><path d="M67 210.5H71" stroke="#A0A0A0" stroke-width="1" stroke-dasharray="1 1"/><path d="M67 226.5H71" stroke="#A0A0A0" stroke-width="1" stroke-dasharray="1 1"/><path d="M67 242.5H71" stroke="#A0A0A0" stroke-width="1" stroke-dasharray="1 1"/></svg>
<div class="a" style="left:73px;top:90px;line-height:16px;white-space:nowrap;font-weight:bold;letter-spacing:0.2px;">Application</div>
<div class="a" style="left:58px;top:94px;width:9px;height:9px;border:1px solid #98A5B0;border-radius:1px;background:linear-gradient(135deg,#fff 30%,#C6C3B6)"></div>
<div class="a" style="left:60px;top:98px;width:5px;height:1px;background:#000"></div>
<div class="a" style="left:91px;top:106px;line-height:16px;white-space:nowrap;letter-spacing:-0.05px;">Hints</div>
<div class="a" style="left:91px;top:122px;line-height:16px;white-space:nowrap;letter-spacing:-0.05px;">Directories</div>
<div class="a" style="left:91px;top:138px;line-height:16px;white-space:nowrap;letter-spacing:-0.05px;">Associated file types</div>
<div class="a" style="left:91px;top:154px;line-height:16px;white-space:nowrap;letter-spacing:-0.05px;">Group definitions</div>
<div class="a" style="left:91px;top:170px;line-height:16px;white-space:nowrap;letter-spacing:-0.05px;">Shortcuts</div>
<div class="a" style="left:91px;top:186px;line-height:16px;white-space:nowrap;letter-spacing:-0.4px;">DVI Viewer</div>
<div class="a" style="left:73px;top:202px;line-height:16px;white-space:nowrap;font-weight:bold;letter-spacing:0.2px;">Editor</div>
<div class="a" style="left:58px;top:206px;width:9px;height:9px;border:1px solid #98A5B0;border-radius:1px;background:linear-gradient(135deg,#fff 30%,#C6C3B6)"></div>
<div class="a" style="left:60px;top:210px;width:5px;height:1px;background:#000"></div>
<div class="a" style="left:62px;top:208px;width:1px;height:5px;background:#000"></div>
<div class="a" style="left:73px;top:218px;line-height:16px;white-space:nowrap;font-weight:bold;letter-spacing:0.2px;">Spellchecking</div>
<div class="a" style="left:58px;top:222px;width:9px;height:9px;border:1px solid #98A5B0;border-radius:1px;background:linear-gradient(135deg,#fff 30%,#C6C3B6)"></div>
<div class="a" style="left:60px;top:226px;width:5px;height:1px;background:#000"></div>
<div class="a" style="left:62px;top:224px;width:1px;height:5px;background:#000"></div>
<div class="a" style="left:73px;top:234px;line-height:16px;white-space:nowrap;font-weight:bold;letter-spacing:0.2px;">Thesauri</div>
<div class="a" style="left:58px;top:238px;width:9px;height:9px;border:1px solid #98A5B0;border-radius:1px;background:linear-gradient(135deg,#fff 30%,#C6C3B6)"></div>
<div class="a" style="left:60px;top:242px;width:5px;height:1px;background:#000"></div>
<div class="a" style="left:62px;top:240px;width:1px;height:5px;background:#000"></div>
<div class="a" style="left:89px;top:186px;width:57px;height:16px;border:1px solid #3A5A8C"></div>
<div class="btn" style="left:52px;top:595px;width:98px;height:21px">
 <svg class="a" style="left:29px;top:1px" width="13" height="18" viewBox="0 0 13 18"><path d="M2.5 5.5Q3 1.8 7 1.8Q11 1.8 10.8 5Q10.5 7.5 7.5 9Q5.8 10 5.8 11.8" fill="none" stroke="#3A3A00" stroke-width="4.2" stroke-dasharray="1.3 1"/><path d="M2.5 5.5Q3 1.8 7 1.8Q11 1.8 10.8 5Q10.5 7.5 7.5 9Q5.8 10 5.8 11.8" fill="none" stroke="#D8DC30" stroke-width="2.6"/><circle cx="5.4" cy="14.8" r="2" fill="#3A3A00"/><circle cx="5.4" cy="14.8" r="1" fill="#D8DC30"/></svg>
 <span class="a" style="left:46px;top:0px;line-height:19px">Help</span></div>
<div class="btn" style="left:607px;top:595px;width:98px;height:21px;box-shadow:inset 1px 1px 0 #CEE7FF,inset -1px -1px 0 #6982EE,inset 2px 2px 0 #BCD4F6,inset -2px -2px 0 #89ADE4">OK</div>
<div class="btn" style="left:715px;top:595px;width:98px;height:21px">Cancel</div>
<svg class="a" style="left:810px;top:612px" width="11" height="11"><g fill="#C2BFB2"><rect x="8" y="0" width="2" height="2"/><rect x="4" y="4" width="2" height="2"/><rect x="8" y="4" width="2" height="2"/><rect x="0" y="8" width="2" height="2"/><rect x="4" y="8" width="2" height="2"/><rect x="8" y="8" width="2" height="2"/></g><g fill="#fff"><rect x="9" y="1" width="1" height="1"/><rect x="5" y="5" width="1" height="1"/><rect x="9" y="5" width="1" height="1"/><rect x="1" y="9" width="1" height="1"/><rect x="5" y="9" width="1" height="1"/><rect x="9" y="9" width="1" height="1"/></g></svg>

</body></html>
